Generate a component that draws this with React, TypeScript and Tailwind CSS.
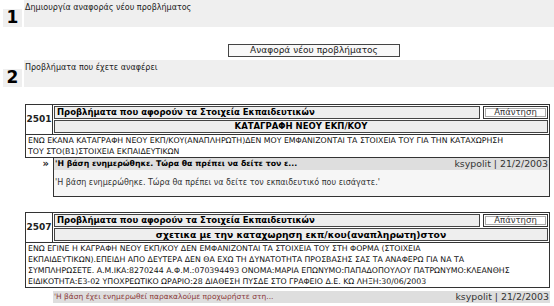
import React from "react";

const Band = ({ n, text }: { n: string; text: string }) => (
  <div className="flex h-[27px] pl-[3px]">
    <div className="w-[19px] mt-[9px] bg-[#efefef] flex items-end justify-center text-[17px] font-bold leading-none pb-[1px] text-black">
      {n}
    </div>
    <div className="flex-1 ml-[2px] bg-[#efefef] pl-[1px] pt-[2px] text-[8px] leading-[11px] text-[#222]">
      {text}
    </div>
  </div>
);

const ReplyBtn = () => (
  <div className="w-[65px] h-[13px] flex border border-[#333] p-[1px] bg-white">
    <div className="flex-1 border border-[#aaa] flex items-center justify-center text-[8.5px] text-[#333] leading-none">
      Απάντηση
    </div>
  </div>
);

const Head = ({ id, sub, subSize }: { id: string; sub: string; subSize: string }) => (
  <div className="flex border border-[#333]">
    <div className="w-[27px] border-r border-[#333] flex items-center justify-center text-[9px] font-bold">
      {id}
    </div>
    <div className="flex-1 flex flex-col gap-[1px] p-[1px]">
      <div className="flex gap-[3px]">
        <div className="flex-1 h-[13px] border border-[#444] bg-[#eeeeee] px-[2px] flex items-center text-[8.5px] font-bold leading-none text-black whitespace-nowrap overflow-hidden">
          Προβλήματα που αφορούν τα Στοιχεία Εκπαιδευτικών
        </div>
        <ReplyBtn />
      </div>
      <div className={`h-[13px] border border-[#444] bg-[#eeeeee] flex items-center justify-center font-bold leading-none text-black whitespace-nowrap overflow-hidden ${subSize}`}>
        {sub}
      </div>
    </div>
  </div>
);

const Desc = ({ lines }: { lines: string[] }) => (
  <div className="border border-t-0 border-[#333] px-[2px] text-[7.8px] leading-[11px] text-[#111] whitespace-nowrap overflow-hidden">
    {lines.map((l, i) => (
      <div key={i}>{l}</div>
    ))}
  </div>
);

export default function App() {
  return (
    <div className="w-[554px] h-[306px] overflow-hidden bg-white font-['DejaVu_Sans',Verdana,sans-serif] text-[#222]">
      <Band n="1" text="Δημιουργία αναφοράς νέου προβλήματος" />
      <div className="mt-[17px] ml-[228px] w-[172px] h-[13px] border border-[#444] bg-[#f8f8f8] flex items-center justify-center text-[9px] leading-none">
        Αναφορά νέου προβλήματος
      </div>
      <div className="mt-[3px]">
        <Band n="2" text="Προβλήματα που έχετε αναφέρει" />
      </div>

      <div className="ml-[25px] w-[525px] mt-[17px]">
        <Head id="2501" sub="ΚΑΤΑΓΡΑΦΗ ΝΕΟΥ ΕΚΠ/ΚΟΥ" subSize="text-[8.5px]" />
        <Desc
          lines={[
            "ΕΝΩ ΕΚΑΝΑ ΚΑΤΑΓΡΑΦΗ ΝΕΟΥ ΕΚΠ/ΚΟΥ(ΑΝΑΠΛΗΡΩΤΗ)ΔΕΝ ΜΟΥ ΕΜΦΑΝΙΖΟΝΤΑΙ ΤΑ ΣΤΟΙΧΕΙΑ ΤΟΥ ΓΙΑ ΤΗΝ ΚΑΤΑΧΩΡΗΣΗ",
            "ΤΟΥ ΣΤΟ(Β1)ΣΤΟΙΧΕΙΑ ΕΚΠΑΙΔΕΥΤΙΚΩΝ",
          ]}
        />
        <div className="flex">
          <div className="w-[28px] text-right pr-[4px] text-[10px] font-bold leading-[12px]">»</div>
          <div className="flex-1 border border-[#333] border-t-0">
            <div className="flex justify-between items-center bg-[#dedede] h-[12px] px-[1px] whitespace-nowrap">
              <span className="font-bold text-[7.8px] text-black">'Η βάση ενημερώθηκε. Τώρα θα πρέπει να δείτε τον ε...</span>
              <span className="text-[#333] text-[9.4px]">ksypolit | 21/2/2003</span>
            </div>
            <div className="bg-[#f6f6f6] h-[26px] px-[1px] pt-[7px] text-[8px] leading-[11px] text-[#333]">
              'Η βάση ενημερώθηκε. Τώρα θα πρέπει να δείτε τον εκπαιδευτικό που εισάγατε.'
            </div>
          </div>
        </div>
      </div>

      <div className="ml-[25px] w-[525px] mt-[15px]">
        <Head id="2507" sub="σχετικα με την καταχωρηση εκπ/κου(αναπληρωτη)στον" subSize="text-[9.2px]" />
        <Desc
          lines={[
            "ΕΝΩ ΕΓΙΝΕ Η ΚΑΓΡΑΦΗ ΝΕΟΥ ΕΚΠ/ΚΟΥ ΔΕΝ ΕΜΦΑΝΙΖΟΝΤΑΙ ΤΑ ΣΤΟΙΧΕΙΑ ΤΟΥ ΣΤΗ ΦΟΡΜΑ (ΣΤΟΙΧΕΙΑ",
            "ΕΚΠΑΙΔΕΥΤΙΚΩΝ).ΕΠΕΙΔΗ ΑΠΟ ΔΕΥΤΕΡΑ ΔΕΝ ΘΑ ΕΧΩ ΤΗ ΔΥΝΑΤΟΤΗΤΑ ΠΡΟΣΒΑΣΗΣ ΣΑΣ ΤΑ ΑΝΑΦΕΡΩ ΓΙΑ ΝΑ ΤΑ",
            "ΣΥΜΠΛΗΡΩΣΕΤΕ. Α.Μ.ΙΚΑ:8270244 Α.Φ.Μ.:070394493 ΟΝΟΜΑ:ΜΑΡΙΑ ΕΠΩΝΥΜΟ:ΠΑΠΑΔΟΠΟΥΛΟΥ ΠΑΤΡΩΝΥΜΟ:ΚΛΕΑΝΘΗΣ",
            "ΕΙΔΙΚΟΤΗΤΑ:Ε3-02 ΥΠΟΧΡΕΩΤΙΚΟ ΩΡΑΡΙΟ:28 ΔΙΑΘΕΣΗ ΠΥΣΔΕ ΣΤΟ ΓΡΑΦΕΙΟ Δ.Ε. ΚΩ ΛΗΞΗ:30/06/2003",
          ]}
        />
        <div className="flex mt-[3px]">
          <div className="w-[28px]" />
          <div className="flex-1 flex justify-between items-center bg-[#dedede] h-[12px] px-[1px] whitespace-nowrap">
            <span className="text-[#8b3a3a] text-[7.5px]">'Η βάση έχει ενημερωθεί παρακαλούμε προχωρήστε στη...</span>
            <span className="text-[#333] text-[9.4px]">ksypolit | 21/2/2003</span>
          </div>
        </div>
      </div>
    </div>
  );
}
